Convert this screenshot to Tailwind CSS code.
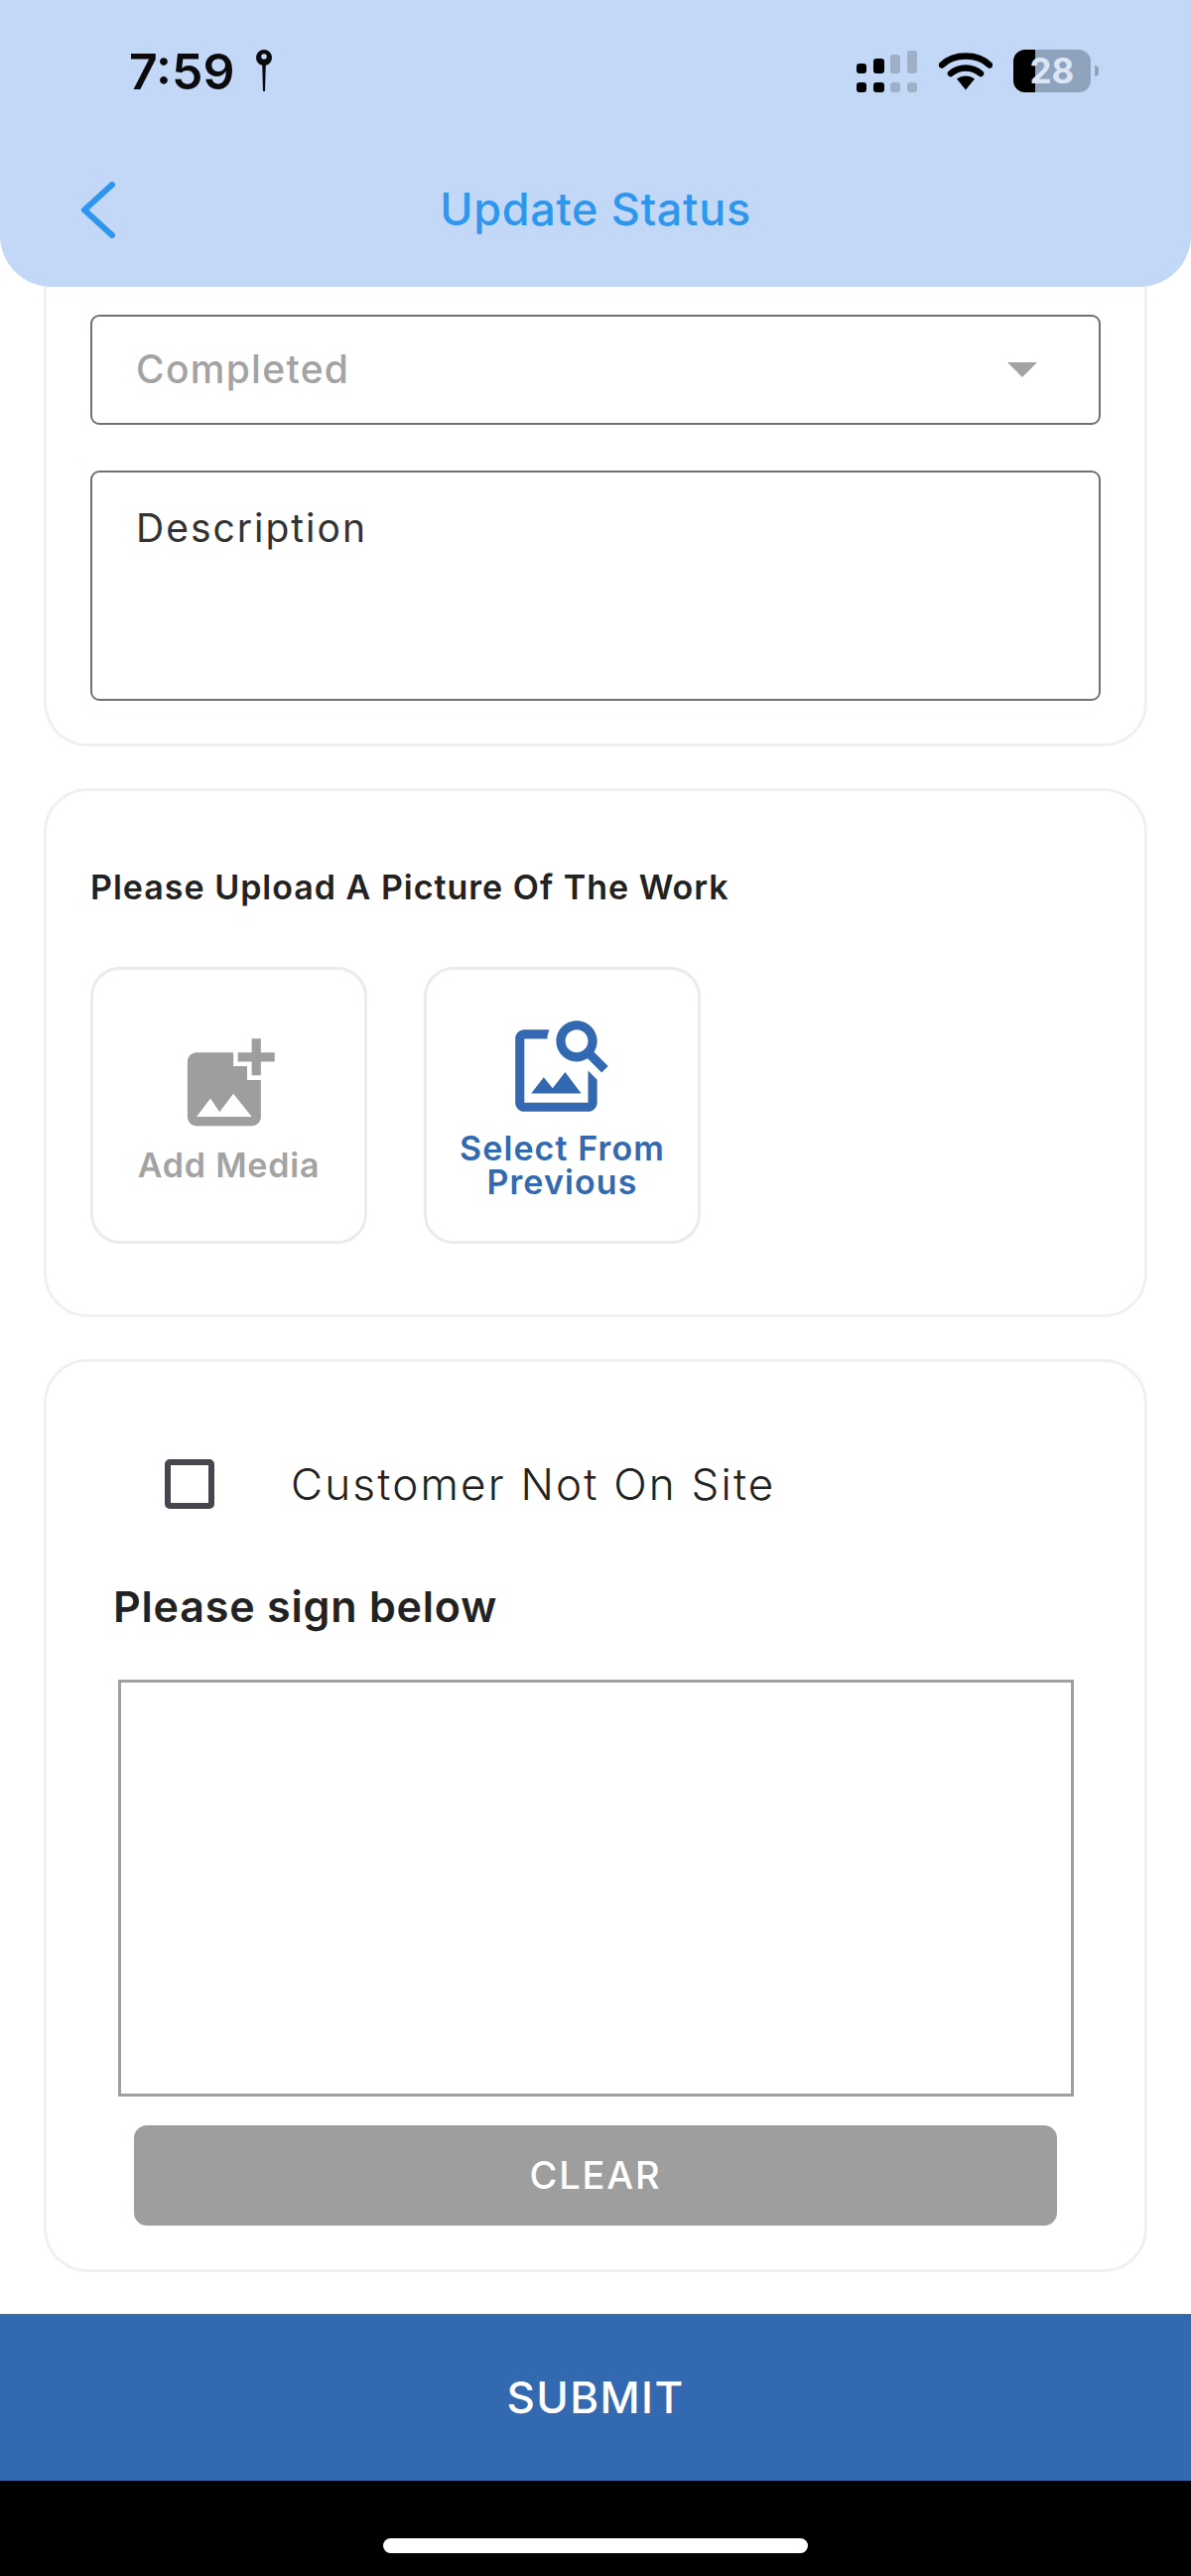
<!DOCTYPE html>
<html lang="en">
  <head>
    <meta charset="UTF-8" />
    <meta name="viewport" content="width=device-width, initial-scale=1.0" />
    <title>Update Status</title>
    <script src="https://cdn.jsdelivr.net/npm/@tailwindcss/browser@4"></script>
  </head>
  <body class="bg-white font-[Inter,sans-serif] w-[1200px] h-[2595px] overflow-hidden flex flex-col">
    <!-- header -->
    <header class="h-[289px] shrink-0 bg-[#c2d8f6] rounded-b-[52px] relative">
      <div class="h-[166px] pl-[130px] pr-[93px] pt-[49px] flex items-start justify-between">
        <div class="flex items-start">
          <span class="text-[50px] leading-[46px] font-semibold text-[#0b0b0d] tracking-[0px]">7:59</span>
          <svg class="ml-[20px]" width="18" height="44" viewBox="0 0 18 44">
            <path d="M9 1a8 8 0 0 1 1.800 15.800L10 43H8L7.200 16.800A8 8 0 0 1 9 1z" fill="#0b0b0d" />
            <circle cx="9" cy="8" r="2.800" fill="#c2d8f6" />
          </svg>
        </div>
        <div class="flex items-start pt-px">
          <svg width="62" height="43" viewBox="0 0 62 43">
            <g fill="#000">
              <rect x="0" y="14" width="10" height="10" rx="3" />
              <rect x="17" y="9" width="11" height="15" rx="3" />
              <rect x="0" y="33" width="10" height="10" rx="3" />
              <rect x="17" y="33" width="11" height="10" rx="3" />
            </g>
            <g fill="#9fb0c6">
              <rect x="34" y="5" width="10" height="19" rx="3" />
              <rect x="51" y="1" width="10" height="23" rx="3" />
              <rect x="34" y="33" width="10" height="10" rx="3" />
              <rect x="51" y="33" width="10" height="10" rx="3" />
            </g>
          </svg>
          <svg class="ml-[21px]" width="54" height="41" viewBox="0 0 54 41">
            <path d="M3 15.500C15 3.500 39 3.500 51 15.500" fill="none" stroke="#000" stroke-width="6.500" stroke-linecap="round" />
            <path d="M12 24C20 16.500 34 16.500 42 24" fill="none" stroke="#000" stroke-width="6.500" stroke-linecap="round" />
            <path d="M18 29.500C23 25.500 31 25.500 36 29.500L27 40.500z" fill="#000" />
          </svg>
          <div class="ml-[21px] relative w-[78px] h-[43px] rounded-[12px] bg-[#8fa3bd] overflow-hidden flex items-center justify-center">
            <div class="absolute left-0 top-0 bottom-0 w-[22px] bg-black"></div>
            <span class="relative text-[35px] leading-none font-bold text-[#dbe6f5]">28</span>
          </div>
          <div class="ml-[4px] mt-[16px] w-[4px] h-[11px] rounded-r-full bg-[#8fa3bd]"></div>
        </div>
      </div>
      <div class="absolute left-0 right-0 top-[180px] h-[62px] flex items-center justify-center">
        <svg class="absolute left-[80px] top-[3px]" width="37" height="57" viewBox="0 0 37 57">
          <path d="M33 3 L5 28.500 L33 54" fill="none" stroke="#2f96ee" stroke-width="6" stroke-linecap="round" stroke-linejoin="round" />
        </svg>
        <span class="text-[45px] font-medium text-[#2f96ee] tracking-[0.7px]">Update Status</span>
      </div>
    </header>

    <main class="flex-1 flex flex-col">
      <div class="px-[44px] flex flex-col gap-[42px]">
        <!-- status card -->
        <section class="h-[463px] bg-white border-x-[3px] border-b-[3px] border-[#f0f0f0] rounded-b-[44px] px-[44px] pt-[28px]">
          <div class="h-[111px] border-2 border-[#6e7278] rounded-[9px] pl-[44px] pr-[62px] flex items-center justify-between">
            <span class="text-[39px] font-medium text-[#a3a3a3] tracking-[1.3px]">Completed</span>
            <svg width="30" height="15" viewBox="0 0 30 15"><path d="M0 0h30L15 15z" fill="#a3a3a3" /></svg>
          </div>
          <div class="mt-[46px] h-[232px] border-2 border-[#6e7278] rounded-[9px] pl-[44px] pt-[33px]">
            <span class="block text-[39px] leading-[46px] text-[#333] tracking-[2px]">Description</span>
          </div>
        </section>

        <!-- upload card -->
        <section class="h-[533px] bg-white border-[3px] border-[#f0f0f0] rounded-[44px] px-[44px] pt-[77px]">
          <h2 class="text-[34px] leading-[40px] font-semibold text-[#222] tracking-[1px]">Please Upload A Picture Of The Work</h2>
          <div class="mt-[60px] flex gap-[57px]">
            <div class="w-[279px] h-[279px] border-[3px] border-[#ebebeb] rounded-[30px] flex flex-col items-center">
              <svg class="mt-[60px]" width="111" height="111" viewBox="0 0 24 24">
                <path fill="#9e9e9e" d="M19 7v2.990s-1.990.010-2 0V7h-3s.010-1.990 0-2h3V2h2v3h3v2h-3zm-3 4V8h-3V5H5c-1.100 0-2 .900-2 2v12c0 1.100.900 2 2 2h12c1.100 0 2-.900 2-2v-8h-3zM5 19l3-4 2 3 3-4 4 5H5z" />
              </svg>
              <span class="mt-[6px] text-[34px] leading-[40px] font-semibold text-[#a3a3a3] tracking-[0.8px]">Add Media</span>
            </div>
            <div class="w-[279px] h-[279px] border-[3px] border-[#ebebeb] rounded-[30px] flex flex-col items-center">
              <svg class="mt-[42px] mr-[3px]" width="110" height="110" viewBox="0 0 24 24">
                <path fill="#3369b0" d="M18 13v7H4V6h5.020c.050-.710.220-1.380.480-2H4c-1.100 0-2 .900-2 2v14c0 1.100.900 2 2 2h14c1.100 0 2-.900 2-2v-5l-2-2zm-1.500 5h-11l2.750-3.530 1.960 2.360 2.750-3.540L16.500 18zm2.800-9.110c.440-.700.700-1.510.700-2.390C20 4.010 17.990 2 15.500 2S11 4.010 11 6.500s2.010 4.500 4.500 4.500c.880 0 1.690-.260 2.390-.700L21 13.420 22.420 12 19.300 8.890zM15.500 9C14.120 9 13 7.880 13 6.500S14.120 4 15.500 4 18 5.120 18 6.500 16.880 9 15.500 9z" />
              </svg>
              <span class="mt-[11px] text-[34px] leading-[34px] font-semibold text-[#3369b0] text-center tracking-[1.1px]">Select From<br />Previous</span>
            </div>
          </div>
        </section>

        <!-- signature card -->
        <section class="h-[920px] bg-white border-[3px] border-[#f0f0f0] rounded-[44px] pt-[97px] flex flex-col">
          <div class="pl-[119px] flex items-center h-[52px]">
            <div class="w-[50px] h-[50px] border-[6px] border-[#46464e] rounded-[5px]"></div>
            <span class="ml-[77px] text-[44px] font-light text-[#222] tracking-[2.2px]">Customer Not On Site</span>
          </div>
          <h3 class="mt-[72px] pl-[67px] text-[43px] leading-[50px] font-semibold text-[#222] tracking-[0.8px]">Please sign below</h3>
          <div class="mt-[49px] ml-[72px] w-[963px] h-[420px] border-[3px] border-[#a0a0a0] bg-white"></div>
          <button class="mt-[29px] ml-[88px] w-[930px] h-[101px] rounded-[13px] bg-[#9e9e9e] text-white text-[38px] font-medium tracking-[1.8px]">CLEAR</button>
        </section>
      </div>

      <button class="mt-[42px] h-[168px] shrink-0 bg-[#3369b0] text-white text-[44px] font-medium tracking-[1.4px]">SUBMIT</button>

      <!-- home indicator -->
      <div class="flex-1 bg-black flex justify-center pt-[58px]">
        <div class="w-[428px] h-[15px] rounded-full bg-white"></div>
      </div>
    </main>
  </body>
</html>
